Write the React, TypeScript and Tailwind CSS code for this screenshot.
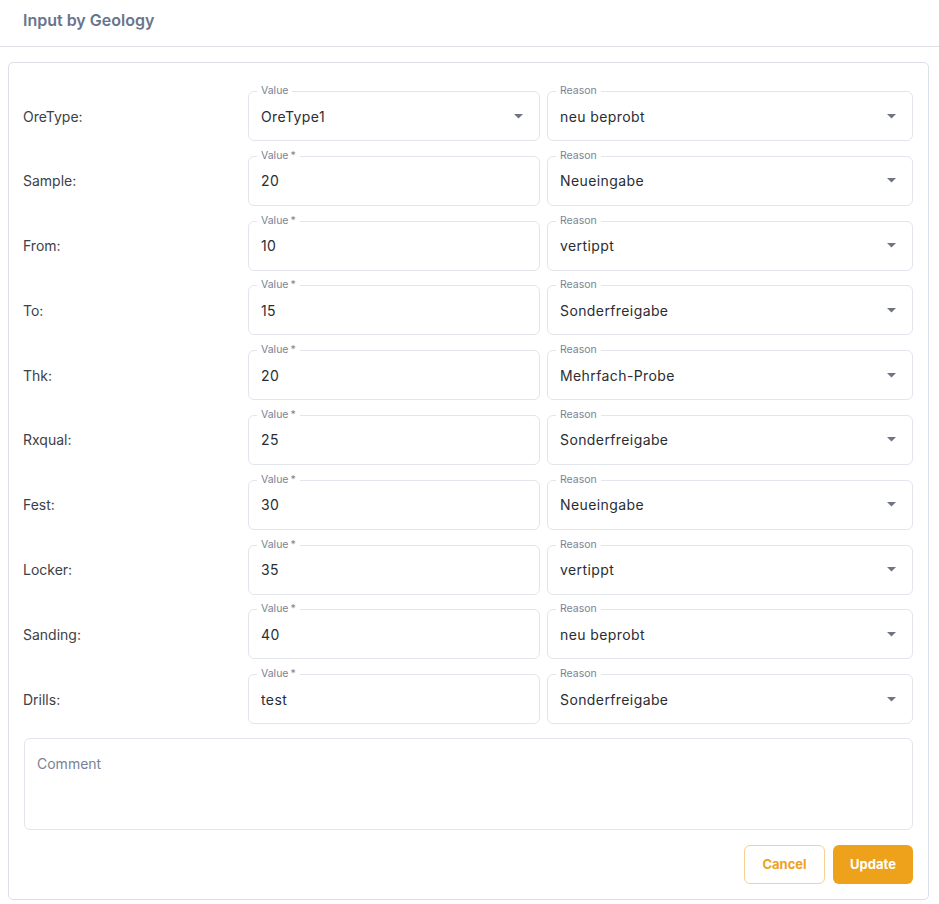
import { useState } from 'react';

const rows = [
  { label: 'OreType:', value: 'OreType1', reason: 'neu beprobt', select: true },
  { label: 'Sample:', value: '20', reason: 'Neueingabe' },
  { label: 'From:', value: '10', reason: 'vertippt' },
  { label: 'To:', value: '15', reason: 'Sonderfreigabe' },
  { label: 'Thk:', value: '20', reason: 'Mehrfach-Probe' },
  { label: 'Rxqual:', value: '25', reason: 'Sonderfreigabe' },
  { label: 'Fest:', value: '30', reason: 'Neueingabe' },
  { label: 'Locker:', value: '35', reason: 'vertippt' },
  { label: 'Sanding:', value: '40', reason: 'neu beprobt' },
  { label: 'Drills:', value: 'test', reason: 'Sonderfreigabe' },
];

function Caret() {
  return (
    <svg width="9" height="5" viewBox="0 0 9 5" className="shrink-0">
      <path d="M0 0h9L4.5 4.5z" fill="#6e7480" />
    </svg>
  );
}

function Field({ legend, required, value, select, className }: { legend: string; required?: boolean; value: string; select?: boolean; className?: string }) {
  return (
    <div className={`relative h-[50px] rounded-md border border-[#e3e5ec] flex items-center pl-3 pr-4 ${className ?? ''}`}>
      <span className="absolute left-2 -top-[8px] bg-white px-1 text-[10.5px] leading-[14px] text-[#7a8396]">
        {legend}
        {required && <span className="ml-[2px]">*</span>}
      </span>
      <span className="flex-1 text-[14px] text-[#2a2d34] tracking-[0.4px]">{value}</span>
      {select && <Caret />}
    </div>
  );
}

export default function App() {
  const [comment, setComment] = useState('');

  return (
    <div className="min-h-[904px] bg-white" style={{ fontFamily: 'Inter, "Noto Sans", sans-serif' }}>
      <div className="h-[47px] border-b border-[#dfe1e7] px-[23px] pt-2">
        <h1 className="text-[16px] leading-6 font-semibold text-[#67758e]">Input by Geology</h1>
      </div>

      <div className="ml-2 mr-[10px] mt-[15px] rounded-[5px] border border-[#dcdfe6] px-[15px] pt-[28px] pb-[15px]">
        <div className="flex flex-col gap-[14.8px]">
          {rows.map((r) => (
            <div key={r.label} className="flex items-center">
              <div className="w-[224px] shrink-0 -ml-px text-[14px] text-[#3d4148]">{r.label}</div>
              <Field legend="Value" required={!r.select} value={r.value} select={r.select} className="w-[292px] shrink-0 ml-px" />
              <Field legend="Reason" value={r.reason} select className="flex-1 ml-[7px]" />
            </div>
          ))}
        </div>

        <textarea
          value={comment}
          onChange={(e) => setComment(e.target.value)}
          placeholder="Comment"
          className="mt-[14px] block w-full h-[92px] resize-none rounded-md border border-[#e3e5ec] px-3 py-[14px] text-[14px] text-[#2a2d34] placeholder:text-[#7a8396] outline-none"
        />

        <div className="flex justify-end gap-2 mt-[15px]">
          <button className="w-[81px] h-[39px] rounded-md border border-[#f6d192] text-[13px] font-bold text-[#eea21b] bg-white">
            Cancel
          </button>
          <button className="w-[80px] h-[39px] rounded-md bg-[#eea21b] text-[13px] font-bold text-white">
            Update
          </button>
        </div>
      </div>
    </div>
  );
}
